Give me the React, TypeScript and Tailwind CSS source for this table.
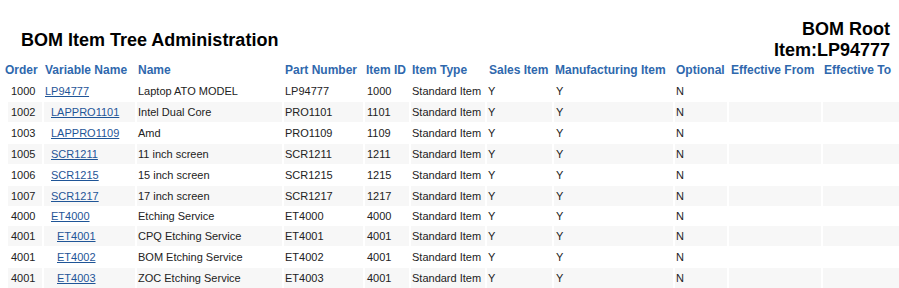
const rows = [
  { order: "1000", level: 0, variable: "LP94777", name: "Laptop ATO MODEL", part: "LP94777", id: "1000" },
  { order: "1002", level: 1, variable: "LAPPRO1101", name: "Intel Dual Core", part: "PRO1101", id: "1101" },
  { order: "1003", level: 1, variable: "LAPPRO1109", name: "Amd", part: "PRO1109", id: "1109" },
  { order: "1005", level: 1, variable: "SCR1211", name: "11 inch screen", part: "SCR1211", id: "1211" },
  { order: "1006", level: 1, variable: "SCR1215", name: "15 inch screen", part: "SCR1215", id: "1215" },
  { order: "1007", level: 1, variable: "SCR1217", name: "17 inch screen", part: "SCR1217", id: "1217" },
  { order: "4000", level: 1, variable: "ET4000", name: "Etching Service", part: "ET4000", id: "4000" },
  { order: "4001", level: 2, variable: "ET4001", name: "CPQ Etching Service", part: "ET4001", id: "4001" },
  { order: "4001", level: 2, variable: "ET4002", name: "BOM Etching Service", part: "ET4002", id: "4001" },
  { order: "4001", level: 2, variable: "ET4003", name: "ZOC Etching Service", part: "ET4003", id: "4001" },
];

const headers = [
  "Order",
  "Variable Name",
  "Name",
  "Part Number",
  "Item ID",
  "Item Type",
  "Sales Item",
  "Manufacturing Item",
  "Optional",
  "Effective From",
  "Effective To",
];

const indent = ["pl-[1px]", "pl-[7px]", "pl-[13px]"];

export default function App() {
  return (
    <div className="w-[899px] h-[288px] overflow-hidden bg-white font-['Liberation_Sans',Arial,sans-serif] text-[#222]">
      {/* Title bar */}
      <div className="flex items-center justify-between pt-[20px] pl-[21px] pr-[9px] h-[60px]">
        <h1 className="text-[18px] font-bold text-black leading-[21px]">BOM Item Tree Administration</h1>
        <div className="text-right text-[18px] font-bold text-black leading-[21px]">
          <div>BOM Root</div>
          <div>Item:LP94777</div>
        </div>
      </div>

      {/* Tree table */}
      <div className="grid grid-cols-[38px_91px_145px_79px_44px_74px_65px_119px_52px_92px_1fr] grid-rows-[20px_20px_20px_20px_20px_20px_20px_18px_20px_20px_20px] gap-x-[2px] gap-y-[1px] pl-[4px]">
        {headers.map((h, i) => (
          <div
            key={h}
            className={`flex items-center whitespace-nowrap text-[12px] font-bold text-[#2f68ad] ${i === 6 || i === 9 ? "pl-[2px]" : "pl-[1px]"}`}
          >
            {h}
          </div>
        ))}

        {rows.map((r, idx) => {
          const bg = idx % 2 === 1 ? "bg-[#f7f7f7]" : "bg-white";
          const cell = `flex items-center whitespace-nowrap text-[11px] ${bg}`;
          return [
            <div key={`${idx}-o`} className={`${cell} ml-[4px] pl-[3px]`}>{r.order}</div>,
            <div key={`${idx}-v`} className={`${cell} ${indent[r.level]}`}>
              <a href="#" className="text-[#1f5597] underline">{r.variable}</a>
            </div>,
            <div key={`${idx}-n`} className={`${cell} pl-[1px]`}>{r.name}</div>,
            <div key={`${idx}-p`} className={`${cell} pl-[1px]`}>{r.part}</div>,
            <div key={`${idx}-i`} className={`${cell} pl-[2px]`}>{r.id}</div>,
            <div key={`${idx}-t`} className={`${cell} pl-[1px]`}>Standard Item</div>,
            <div key={`${idx}-s`} className={`${cell} pl-[1px]`}>Y</div>,
            <div key={`${idx}-m`} className={`${cell} pl-[2px]`}>Y</div>,
            <div key={`${idx}-op`} className={`${cell} pl-[1px]`}>N</div>,
            <div key={`${idx}-ef`} className={cell}></div>,
            <div key={`${idx}-et`} className={cell}></div>,
          ];
        })}
      </div>
    </div>
  );
}
